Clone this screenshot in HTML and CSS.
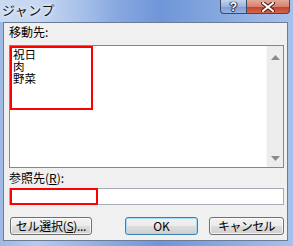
FILE: index.html
```html
<!DOCTYPE html>
<html lang="ja">
<head>
  <meta charset="UTF-8" />
  <title>ジャンプ</title>
  <link rel="stylesheet" href="styles.css">
</head>
<body>
<div class="window">
  <div class="titlebar">
    <span class="title">ジャンプ</span>
    <div class="caption-buttons">
      <button class="cap help">?</button>
      <button class="cap close">
        <svg width="14" height="10" viewBox="0 0 14 10">
          <path d="M2 1 L12 9 M12 1 L2 9" stroke="#4a1a10" stroke-width="4" stroke-linecap="square"/>
          <path d="M2 1 L12 9 M12 1 L2 9" stroke="#fff" stroke-width="2" stroke-linecap="square"/>
        </svg>
      </button>
    </div>
  </div>

  <div class="client">
    <div class="label">移動先:</div>
    <div class="listbox">
      <ul class="items">
        <li>祝日</li>
        <li>肉</li>
        <li>野菜</li>
      </ul>
      <div class="scrollbar">
        <svg width="9" height="5" viewBox="0 0 9 5"><path d="M0 5 L4.5 0 L9 5 Z" fill="#8a8a8a"/></svg>
        <svg width="9" height="5" viewBox="0 0 9 5"><path d="M0 0 L4.5 5 L9 0 Z" fill="#8a8a8a"/></svg>
      </div>
      <div class="mark mark-list"></div>
    </div>

    <div class="label label-ref">参照先(<u>R</u>):</div>
    <div class="textbox">
      <div class="mark mark-ref"></div>
    </div>

    <div class="actions">
      <button class="btn btn-cell">セル選択(<u>S</u>)...</button>
      <button class="btn btn-ok">OK</button>
      <button class="btn btn-cancel">キャンセル</button>
    </div>
  </div>
</div>
</body>
</html>
```

FILE: styles.css
```css
* { box-sizing: border-box; }
body {
  margin: 0;
  width: 293px;
  height: 246px;
  overflow: hidden;
  font-family: 'Noto Sans CJK JP', 'Liberation Sans', sans-serif;
  font-size: 12px;
  color: #000;
}
.window {
  width: 293px;
  height: 246px;
  display: flex;
  flex-direction: column;
  padding: 0 5px 5px 3px;
  background: linear-gradient(to right, #9fb9e4 0%, #b6cbec 12%, #8eaee2 35%, #6f96d8 55%, #86a8df 75%, #a9c1ea 100%);
}
.titlebar {
  height: 22px;
  display: flex;
  align-items: flex-start;
  margin-left: -3px;
  margin-right: -5px;
  background: linear-gradient(to right, rgba(220,232,248,0.7) 0%, rgba(220,232,248,0.3) 20%, rgba(220,232,248,0) 40%);
}
.title {
  padding: 2px 0 0 2px;
  font-size: 13px;
  line-height: 16px;
  letter-spacing: 0.5px;
  color: #111;
  text-shadow: 0 0 3px #fff, 0 0 5px #eef4fc;
}
.caption-buttons {
  margin-left: auto;
  margin-right: 3px;
  display: flex;
}
.cap {
  height: 14px;
  border: 1px solid #3b4a66;
  border-top: none;
  padding: 0;
  margin: 0;
  display: flex;
  align-items: center;
  justify-content: center;
}
.help {
  width: 26px;
  border-radius: 0 0 0 4px;
  border-right: none;
  background: linear-gradient(#c3d3ec, #9db5de 50%, #7e9cd0 51%, #94b2e2);
  color: #fff;
  font-family: 'Liberation Sans', sans-serif;
  font-weight: bold;
  font-size: 12px;
  line-height: 12px;
  text-shadow: 0 0 1px #223, 1px 0 1px #223, -1px 0 1px #223, 0 1px 1px #223;
}
.close {
  width: 44px;
  border-radius: 0 0 4px 0;
  background: linear-gradient(#e4a898, #d6826c 50%, #c2412a 51%, #d2664c);
}
.client {
  flex: 1;
  background: #f0f0f0;
  border: 1px solid #6c7c98;
  padding: 0 3px 0 5px;
  display: flex;
  flex-direction: column;
}
.label {
  height: 22px;
  padding-top: 1px;
  line-height: 16px;
}
.label-ref {
  height: 20px;
  padding-top: 2px;
}
.label u { text-decoration-thickness: 1px; text-underline-offset: 1px; }
.listbox {
  position: relative;
  height: 123px;
  border: 1px solid #828790;
  background: #fff;
  display: flex;
}
.items {
  list-style: none;
  margin: 0;
  padding: 2px 0 0 3px;
  flex: 1;
  font-size: 11.5px;
}
.items li {
  line-height: 12px;
  height: 12px;
}
.scrollbar {
  width: 17px;
  background: #ededed;
  border-left: 1px solid #f8f8f8;
  display: flex;
  flex-direction: column;
  justify-content: space-between;
  align-items: center;
  padding: 9px 0 6px;
}
.textbox {
  position: relative;
  height: 17px;
  border: 1px solid #a5acb5;
  background: #fff;
}
.mark {
  position: absolute;
  border: 2px solid #ff0000;
}
.mark-list {
  left: 0;
  top: 0;
  width: 83px;
  height: 64px;
}
.mark-ref {
  left: 0;
  top: -1px;
  width: 88px;
  height: 17px;
}
.actions {
  display: flex;
  margin-top: 12px;
  padding-left: 1px;
}
.btn {
  height: 18px;
  padding: 0;
  font-family: 'Noto Sans CJK JP', 'Liberation Sans', sans-serif;
  font-size: 12px;
  line-height: 14px;
  color: #000;
  border: 1px solid #707070;
  border-radius: 3px;
  background: linear-gradient(#f2f2f2, #ebebeb 50%, #dddddd 51%, #cfcfcf);
  box-shadow: inset 0 0 0 1px rgba(255,255,255,0.7);
}
.btn u { text-underline-offset: 1px; }
.btn-cell { width: 82px; letter-spacing: -0.3px; }
.btn-ok {
  width: 73px;
  margin-left: auto;
  border-color: #3c7fb1;
  box-shadow: inset 0 0 0 1px #a8dcf6;
}
.btn-cancel {
  width: 75px;
  margin-left: 11px;
  letter-spacing: -0.6px;
}
```
